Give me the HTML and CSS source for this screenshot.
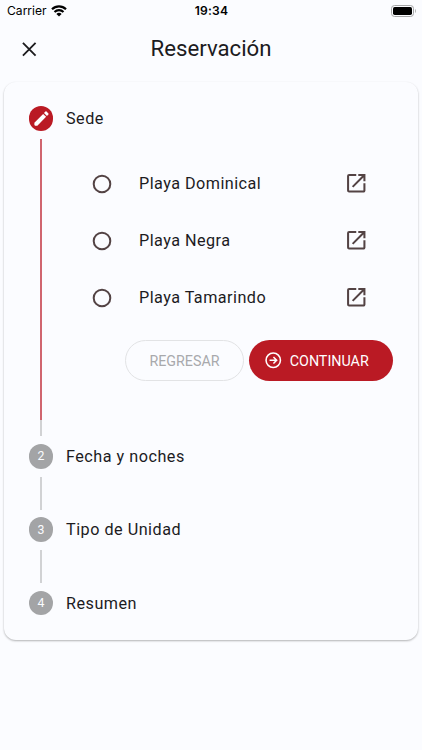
FILE: index.html
```html
<!DOCTYPE html>
<html lang="es">
<head>
  <meta charset="UTF-8">
  <title>Reservación</title>
  <meta name="viewport" content="width=device-width, initial-scale=1.0">
  <link rel="stylesheet" href="styles.css">
</head>
<body>
  <svg width="0" height="0" class="defs">
    <symbol id="open" viewBox="0 0 24 24">
      <path d="M19 19H5V5h7V3H5a2 2 0 0 0-2 2v14a2 2 0 0 0 2 2h14c1.1 0 2-.9 2-2v-7h-2v7zM14 3v2h3.59l-9.83 9.83 1.41 1.41L19 6.41V10h2V3h-7z"/>
    </symbol>
    <symbol id="radio" viewBox="0 0 20 20">
      <circle cx="10" cy="10" r="8.3" fill="none" stroke="#534344" stroke-width="2"/>
    </symbol>
  </svg>

  <!-- Barra de estado -->
  <div class="status-bar">
    <div class="carrier">
      <span>Carrier</span>
      <svg class="wifi" viewBox="0 0 16 12">
        <path d="M1 4.2a10 10 0 0 1 14 0" fill="none" stroke="#000" stroke-width="2.2"/>
        <path d="M3.5 7a6.4 6.4 0 0 1 9 0" fill="none" stroke="#000" stroke-width="2.1"/>
        <path d="M8 11.6 5.4 9a3.7 3.7 0 0 1 5.2 0z"/>
      </svg>
    </div>
    <div class="time">19:34</div>
    <div class="battery-wrap">
      <svg class="battery" viewBox="0 0 26 12">
        <rect x=".5" y=".5" width="22" height="11" rx="3" fill="none" stroke="#a5a6a7"/>
        <rect x="2" y="2" width="19" height="8" rx="1.7"/>
        <path d="M24 4v4c1.2-.6 1.2-3.4 0-4z" fill="#a5a6a7"/>
      </svg>
    </div>
  </div>

  <!-- Encabezado -->
  <header class="header">
    <svg class="close" viewBox="0 0 24 24">
      <path d="M5.8 5.8l12.4 12.4M18.2 5.8 5.8 18.2" stroke="#1c1b1e" stroke-width="1.8"/>
    </svg>
    <h1>Reservación</h1>
  </header>

  <div class="card">
    <!-- Paso 1 -->
    <div class="step active">
      <div class="rail">
        <div class="bullet">
          <svg viewBox="0 0 24 24"><path d="M3 17.25V20a1 1 0 0 0 1 1h2.75L17.81 9.94l-3.75-3.75L3 17.25zM20.71 7.04a1 1 0 0 0 0-1.41l-2.34-2.34a1 1 0 0 0-1.41 0l-1.83 1.83 3.75 3.75 1.83-1.83z"/></svg>
        </div>
        <div class="line"></div>
      </div>
      <div class="content">
        <div class="step-title">Sede</div>
        <div class="options">
          <div class="option">
            <svg class="radio"><use href="#radio"/></svg>
            <span class="name">Playa Dominical</span>
            <svg class="link"><use href="#open"/></svg>
          </div>
          <div class="option">
            <svg class="radio"><use href="#radio"/></svg>
            <span class="name">Playa Negra</span>
            <svg class="link"><use href="#open"/></svg>
          </div>
          <div class="option">
            <svg class="radio"><use href="#radio"/></svg>
            <span class="name">Playa Tamarindo</span>
            <svg class="link"><use href="#open"/></svg>
          </div>
        </div>
        <div class="actions">
          <button class="btn back" disabled>REGRESAR</button>
          <button class="btn next">
            <svg viewBox="0 0 18 18" fill="none" stroke="#fff" stroke-width="1.5">
              <circle cx="9" cy="9" r="7"/>
              <path d="M5.4 9h6.8M9.2 5.9 12.3 9l-3.1 3.1"/>
            </svg>
            <span>CONTINUAR</span>
          </button>
        </div>
      </div>
    </div>

    <!-- Pasos pendientes -->
    <div class="step">
      <div class="rail"><div class="bullet">2</div><div class="line"></div></div>
      <div class="content"><div class="step-title">Fecha y noches</div></div>
    </div>
    <div class="step">
      <div class="rail"><div class="bullet">3</div><div class="line"></div></div>
      <div class="content"><div class="step-title">Tipo de Unidad</div></div>
    </div>
    <div class="step">
      <div class="rail"><div class="bullet">4</div></div>
      <div class="content"><div class="step-title">Resumen</div></div>
    </div>
  </div>
</body>
</html>
```
FILE: styles.css
```css
* {
  box-sizing: border-box;
}
body {
  margin: 0;
  min-height: 750px;
  background: #fbfcff;
  color: #1c1b1e;
  font-family: Roboto, sans-serif;
  overflow: hidden;
}
.defs {
  display: block;
}
.status-bar {
  display: grid;
  grid-template-columns: 1fr auto 1fr;
  align-items: center;
  height: 22px;
  padding: 0 6px 0 7px;
  font-family: Inter, sans-serif;
  font-size: 12.1px;
  color: #000;
}
.carrier {
  display: flex;
  align-items: center;
  gap: 4px;
  margin-top: -1px;
}
.wifi {
  width: 16px;
  height: 12px;
}
.time {
  margin-top: -1px;
  font-weight: 600;
  letter-spacing: 0.2px;
}
.battery-wrap {
  display: flex;
  justify-content: flex-end;
  margin-right: -1px;
}
.battery {
  width: 26px;
  height: 12px;
  margin-top: -1px;
}
.header {
  display: grid;
  grid-template-columns: 58px 1fr 58px;
  align-items: center;
  height: 54px;
}
.close {
  width: 24.5px;
  height: 24.5px;
  margin-left: 17px;
}
h1 {
  margin: -2px 0 0;
  font-size: 22.2px;
  font-weight: 400;
  text-align: center;
}
.card {
  margin: 6px 4px 0;
  height: 558px;
  padding: 24px 25px 0 24px;
  border-radius: 12px;
  background: #fbfcff;
  box-shadow: 0 1px 2px rgba(0,0,0,0.25), 0 1px 3px rgba(0,0,0,0.05);
}
.step {
  display: flex;
  gap: 12px;
  height: 73.4px;
}
.step.active {
  height: 338px;
}
.rail {
  display: flex;
  flex-direction: column;
  align-items: center;
  width: 26px;
}
.bullet {
  display: flex;
  align-items: center;
  justify-content: center;
  width: 24.5px;
  height: 24.5px;
  border-radius: 50%;
  background: #a3a4a6;
  color: #fbfcff;
  font-size: 12.3px;
}
.bullet svg {
  width: 19px;
  height: 19px;
  fill: #fff;
}
.line {
  width: 1.5px;
  height: 33px;
  margin-top: 8px;
  background: #d1d2d4;
}
.active .bullet {
  background: #ba1a24;
}
.active .line {
  width: 2px;
  height: 297px;
  background: linear-gradient(#d0656f 281px, #d1d2d4 281px);
}
.content {
  flex: 1;
}
.step-title {
  line-height: 25px;
  font-size: 16.2px;
  letter-spacing: 0.5px;
}
.options {
  padding: 24px 25px 0 26px;
}
.option {
  display: flex;
  align-items: center;
  height: 57px;
}
.radio {
  width: 20px;
  height: 20px;
}
.name {
  flex: 1;
  margin-left: 27px;
  font-size: 16.2px;
  letter-spacing: 0.46px;
}
.link {
  width: 24.5px;
  height: 24.5px;
  fill: #534344;
}
.actions {
  display: flex;
  justify-content: flex-end;
  gap: 5px;
  margin-top: 14px;
}
.btn {
  display: flex;
  align-items: center;
  justify-content: center;
  height: 41px;
  padding: 0;
  border: none;
  border-radius: 21px;
  font-family: inherit;
  font-size: 14.3px;
}
.back {
  width: 119px;
  border: 1px solid #e2e3e5;
  background: transparent;
  color: #a8a9ac;
}
.next {
  width: 144px;
  padding-right: 9px;
  gap: 7px;
  background: #ba1a24;
  color: #fff;
}
.next svg {
  width: 18.5px;
  height: 18.5px;
}
```
